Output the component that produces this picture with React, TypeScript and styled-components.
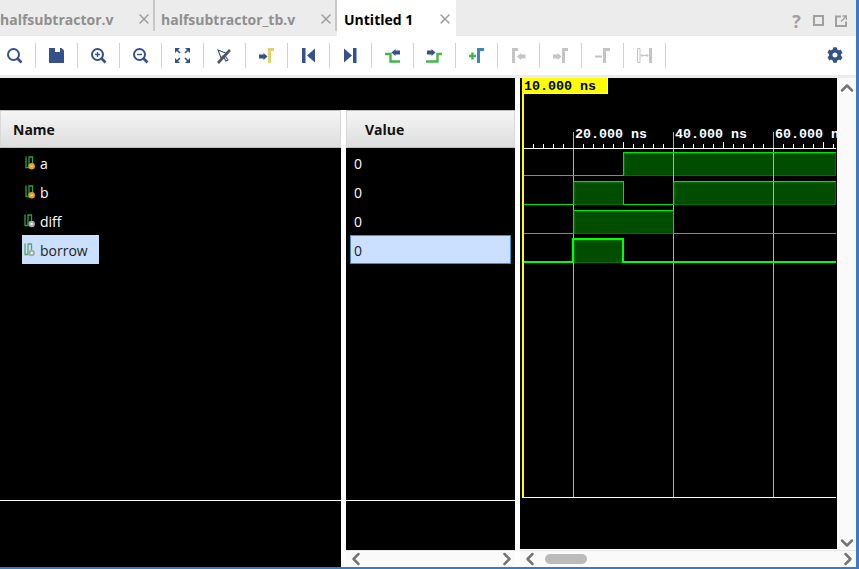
import styled, { createGlobalStyle } from 'styled-components';
import { X, ChevronLeft, ChevronRight, ChevronUp, ChevronDown } from 'lucide-react';
import { FaCog } from 'react-icons/fa';

const NAVY = '#34518a';
const GREY = '#c4c4c4';
const GREEN = '#43b649';

const GlobalStyle = createGlobalStyle`
  html, body { margin: 0; padding: 0; background: #fff; }
  body { font-family: "Open Sans", "Noto Sans", sans-serif; }
  * { box-sizing: border-box; }
`;

const Window = styled.div`
  width: 859px;
  height: 569px;
  display: flex;
  flex-direction: column;
  border-right: 3px solid #3f78c9;
  border-bottom: 2px solid #3f78c9;
  overflow: hidden;
`;

const TabBar = styled.div`
  height: 36px;
  flex: none;
  display: flex;
  background: #ececec;
`;

const Tab = styled.div<{ $width: number; $active?: boolean; $first?: boolean }>`
  width: ${({ $width }) => $width}px;
  display: flex;
  align-items: center;
  justify-content: space-between;
  padding: ${({ $active, $first }) => ($active ? '2px 3px 0 7px' : $first ? '2px 1px 0 0' : '2px 1px 0 6px')};
  background: ${({ $active }) => ($active ? '#fff' : 'transparent')};
  color: ${({ $active }) => ($active ? '#000' : '#8f8f8f')};
  font-size: 14px;
  font-weight: 700;
  white-space: nowrap;
  svg { color: #9a9a9a; }
`;

const TabDivider = styled.div`
  width: 2px;
  height: 31px;
  background: #c8c8c8;
`;

const WindowTools = styled.div`
  margin-left: auto;
  display: flex;
  align-items: center;
  gap: 11px;
  padding: 5px 9px 0 0;
  color: #a0a0a0;
`;

const Help = styled.span`
  font-size: 18px;
  font-weight: 700;
  line-height: 18px;
  width: 11px;
  text-align: center;
`;

const Restore = styled.div`
  width: 11px;
  height: 11px;
  border: 2px solid #a0a0a0;
`;

const Toolbar = styled.div`
  height: 42px;
  flex: none;
  display: flex;
  align-items: flex-start;
  padding-top: 7px;
  background: #fff;
  border-bottom: 3px solid #ececec;
`;

const ToolButton = styled.div`
  width: 42px;
  height: 25px;
  display: flex;
  align-items: center;
  justify-content: center;
  border-right: 1px solid #d2d2d2;
  padding-right: 1px;
  &:first-child { width: 36px; padding-right: 7px; }
`;

const SettingsButton = styled.div`
  margin-left: auto;
  width: 42px;
  height: 25px;
  display: flex;
  align-items: center;
  justify-content: center;
  padding-bottom: 2px;
  padding-right: 1px;
  color: ${NAVY};
`;

const Panes = styled.div`
  flex: 1;
  min-height: 0;
  display: flex;
  background: #fff;
`;

const LeftColumn = styled.div`
  width: 515px;
  display: flex;
  flex-direction: column;
`;

const TopBand = styled.div`
  height: 32px;
  background: #000;
  flex: none;
`;

const Columns = styled.div`
  flex: 1;
  min-height: 0;
  display: flex;
  gap: 5px;
`;

const Column = styled.div<{ $width: number }>`
  width: ${({ $width }) => $width}px;
  display: flex;
  flex-direction: column;
`;

const HeaderCell = styled.div<{ $pad: number }>`
  height: 38px;
  flex: none;
  display: flex;
  align-items: center;
  padding-left: ${({ $pad }) => $pad}px;
  font-size: 14px;
  font-weight: 700;
  color: #111;
  background: linear-gradient(#f5f5f5, #dedede);
  border: 1px solid #bdbdbd;
  border-left-color: #d8d8d8;
  border-right-color: #d8d8d8;
`;

const List = styled.div`
  flex: 1;
  min-height: 0;
  background: #000;
`;

const Footer = styled.div<{ $height: number }>`
  height: ${({ $height }) => $height}px;
  flex: none;
  background: #000;
  border-top: 1px solid #fff;
`;

const NameRow = styled.div`
  height: 29px;
  display: flex;
  align-items: stretch;
  padding-left: 22px;
`;

const NameLabel = styled.div<{ $selected?: boolean }>`
  display: flex;
  align-items: center;
  padding: 2px 11px 0 2px;
  font-size: 14px;
  color: ${({ $selected }) => ($selected ? '#222' : '#fff')};
  background: ${({ $selected }) => ($selected ? '#cbdfff' : 'transparent')};
`;

const ValueRow = styled.div<{ $selected?: boolean }>`
  height: 29px;
  width: 161px;
  margin-left: 4px;
  display: flex;
  align-items: center;
  padding: 2px 0 0 3px;
  font-size: 14px;
  color: ${({ $selected }) => ($selected ? '#222' : '#fff')};
  background: ${({ $selected }) => ($selected ? '#cbdfff' : 'transparent')};
  border: 1px solid ${({ $selected }) => ($selected ? '#3d8fd0' : 'transparent')};
`;

const HScroll = styled.div`
  height: 17px;
  flex: none;
  display: flex;
  align-items: center;
  justify-content: space-between;
  padding: 0 8px 0 10px;
  background: #fafafa;
  border-top: 1px solid #e6e6e6;
  color: #757575;
  svg { flex: none; margin: 0 -10px; }
`;

const ThumbTrack = styled.div`
  flex: 1;
  height: 100%;
  padding: 3px 0 0 15px;
`;

const Thumb = styled.div`
  width: 42px;
  height: 10px;
  border-radius: 5px;
  background: #bbb;
`;

const WavePane = styled.div`
  width: 336px;
  margin-left: 5px;
  display: flex;
  flex-direction: column;
`;

const WaveBody = styled.div`
  flex: 1;
  min-height: 0;
  display: flex;
`;

const WaveCanvas = styled.svg`
  width: 317px;
  height: 471px;
  display: block;
  background: #000;
  flex: none;
`;

const VScroll = styled.div`
  flex: 1;
  display: flex;
  flex-direction: column;
  align-items: center;
  justify-content: space-between;
  padding: 10px 0 7px;
  background: #fafafa;
  color: #757575;
  svg { flex: none; margin: -10px 0; }
`;

const WaveText = styled.text<{ $dark?: boolean }>`
  font-family: "Liberation Mono", monospace;
  font-size: 13.33px;
  font-weight: 700;
  fill: ${({ $dark }) => ($dark ? '#000' : '#fff')};
`;

const Bracket = ({ x, color, reach }: { x: number; color: string; reach: number }) => (
  <path d={`M${x} 2H${reach}V5H${x + 3}V17H${x}Z`} fill={color} />
);

const ArrowRight = ({ x, y, color }: { x: number; y: number; color: string }) => (
  <path d={`M${x} ${y + 0.5}h4.500v-1.500l4 3.500-4 3.500v-1.500h-4.500z`} fill={color} />
);

const ArrowLeft = ({ x, y, color }: { x: number; y: number; color: string }) => (
  <path d={`M${x + 8.5} ${y + 0.5}h-4.500v-1.500l-4 3.500 4 3.500v-1.500h4.500z`} fill={color} />
);

const Lens = ({ mark }: { mark?: 'plus' | 'minus' }) => (
  <g fill="none" stroke={NAVY}>
    <circle cx="9.5" cy="8.5" r="5.5" strokeWidth="2" />
    <path d="M13.5 12.5l4 4" strokeWidth="2.6" />
    {mark && <path d="M7 8.5h5" strokeWidth="1.4" />}
    {mark === 'plus' && <path d="M9.5 6v5" strokeWidth="1.4" />}
  </g>
);

const TOOL_ICONS = [
  <Lens />,
  <path d="M3 2h6v4h5V2h1.5L18 4.5V17H3z" fill={NAVY} />,
  <Lens mark="plus" />,
  <Lens mark="minus" />,
  <g fill={NAVY}>
    <path d="M3 2h5L3 7zM18 2h-5l5 5zM3 17h5l-5-5zM18 17h-5l5-5z" />
    <path d="M5 4l3 3M16 4l-3 3M5 15l3-3M16 15l-3-3" stroke={NAVY} strokeWidth="1.6" />
  </g>,
  <g fill="none">
    <path d="M4 4l9 3.5-2.5 1.5 3.5 5-2 1-3-5-2 2z" stroke={NAVY} strokeWidth="1.1" />
    <path d="M4 17L16 4" stroke="#555" strokeWidth="2.6" />
  </g>,
  <g>
    <ArrowRight x={3} y={8} color={NAVY} />
    <Bracket x={12} color="#e3cf6d" reach={18} />
  </g>,
  <path d="M4 2h3.5v15H4zM17 2.5v14L9 9.5z" fill={NAVY} />,
  <path d="M4 2.5v14l8-7zM13 2h3.5v15H13z" fill={NAVY} />,
  <g>
    <path d="M3 8h5.5v7.5H18" fill="none" stroke={GREEN} strokeWidth="2.4" />
    <ArrowLeft x={9.5} y={4} color={NAVY} />
  </g>,
  <g>
    <path d="M2 15.5h11.5V8H18" fill="none" stroke={GREEN} strokeWidth="2.4" />
    <ArrowRight x={3} y={4} color={NAVY} />
  </g>,
  <g>
    <path d="M3 10h7M6.5 6.5v7" stroke={GREEN} strokeWidth="2.4" />
    <Bracket x={11} color="#3f86b8" reach={18} />
  </g>,
  <g>
    <Bracket x={4} color={GREY} reach={10} />
    <ArrowLeft x={9} y={8} color={GREY} />
  </g>,
  <g>
    <ArrowRight x={3} y={8} color={GREY} />
    <Bracket x={12} color={GREY} reach={18} />
  </g>,
  <g>
    <path d="M3 10.5h7" stroke={GREY} strokeWidth="2" />
    <Bracket x={11} color={GREY} reach={18} />
  </g>,
  <g>
    <path d="M3.5 2.5h2.5v14H3.5z" fill="none" stroke={GREY} />
    <path d="M15 2h3v15h-3z" fill={GREY} />
    <path d="M7 9.5h7M8.5 8l-1.5 1.5L8.5 11M12.5 8l1.500 1.500L12.500 11" fill="none" stroke={GREY} />
  </g>,
];

const SignalIcon = ({ kind, selected }: { kind: 'in' | 'out'; selected?: boolean }) => {
  const line = selected ? '#55a96a' : '#2ea043';
  const shift = kind === 'in' ? 1 : 0;
  return (
    <svg width="16" height="16" viewBox="0 0 16 16">
      <path
        transform={`translate(${shift} 0)`}
        d="M1 0.500V11.500H4V1H7.500V8"
        fill="none"
        stroke={line}
        strokeWidth="1.300"
      />
      {kind === 'in' ? (
        <>
          <circle cx="7.700" cy="10.200" r="3.200" fill="#e89a2c" />
          <path d="M6.700 9.500l1 1.500 1-1.500" fill="none" stroke="#fff2c8" strokeWidth="0.800" />
        </>
      ) : (
        <>
          <circle cx="7.700" cy="10" r="3.200" fill="#a8a8a8" />
          <circle cx="7.700" cy="10" r="1.300" fill="#f0f0f0" />
        </>
      )}
    </svg>
  );
};

const SIGNALS = [
  { name: 'a', kind: 'in' as const, base: 175, pulses: [[623, 835]] },
  { name: 'b', kind: 'in' as const, base: 204, pulses: [[573, 623], [673, 835]] },
  { name: 'diff', kind: 'out' as const, base: 233, pulses: [[573, 673]] },
  { name: 'borrow', kind: 'out' as const, base: 262, pulses: [[573, 623]], selected: true },
];

const LEFT = 523;
const RIGHT = 836;

// thin traces sit on the pixel centre, the selected 2px trace on the pixel edge
const trace = (base: number, pulses: number[][], off: number) => {
  let d = `M${LEFT} ${base + off}`;
  pulses.forEach(([from, to]) => {
    d += `H${from + off}V${base - 23 + off}`;
    d += to === 835 ? `H${RIGHT}` : `H${to + off}V${base + off}`;
  });
  if (pulses[pulses.length - 1][1] !== 835) d += `H${RIGHT}`;
  return d;
};

const minorTicks = () => {
  const ticks = [];
  for (let x = 533; x < RIGHT; x += 10) {
    if ((x - 573) % 100 === 0) continue;
    ticks.push(
      <line key={x} x1={x + 0.5} x2={x + 0.5} y1={(x - 523) % 50 === 0 ? 142 : 144} y2={148} stroke="#fff" />,
    );
  }
  return ticks;
};

const Waveform = () => (
  <WaveCanvas viewBox="520 78 317 471" shapeRendering="crispEdges">
    {SIGNALS.map((s) =>
      s.pulses.map(([from, to]) => (
        <rect
          key={s.name + from}
          x={from + 1.5}
          y={s.base - 21.5}
          width={to - from - 1}
          height={22}
          fill="#004d00"
          stroke="#007000"
        />
      )),
    )}
    {[573, 673, 773].map((x) => (
      <line key={x} x1={x + 0.5} x2={x + 0.5} y1={132} y2={497} stroke="#b0b0b0" />
    ))}
    {SIGNALS.map((s) => (
      <path
        key={s.name}
        d={trace(s.base, s.pulses, s.selected ? 0 : 0.5)}
        fill="none"
        stroke={s.selected ? '#00ff00' : '#00e600'}
        strokeWidth={s.selected ? 2 : 1}
      />
    ))}
    <line x1={LEFT} x2={RIGHT} y1={148.5} y2={148.5} stroke="#fff" />
    {minorTicks()}
    <line x1={LEFT} x2={RIGHT} y1={497.5} y2={497.5} stroke="#fff" />
    <rect x={522} y={78} width={2} height={420} fill="#ffff00" />
    <rect x={523} y={78} width={85} height={16} fill="#fff" />
    <rect x={523} y={78} width={84} height={15} fill="#ffff00" />
    <g shapeRendering="auto">
      <WaveText $dark x={524} y={90}>10.000 ns</WaveText>
      {[['20.000 ns', 575], ['40.000 ns', 675], ['60.000 ns', 775]].map(([label, x]) => (
        <WaveText key={label} x={x} y={138}>{label}</WaveText>
      ))}
    </g>
  </WaveCanvas>
);

export default function App() {
  return (
    <>
      <GlobalStyle />
      <Window>
        <TabBar>
          <Tab $width={153} $first>halfsubtractor.v<X size={16} strokeWidth={2} /></Tab>
          <TabDivider />
          <Tab $width={180}>halfsubtractor_tb.v<X size={16} strokeWidth={2} /></Tab>
          <TabDivider />
          <Tab $width={119} $active>Untitled 1<X size={16} strokeWidth={2} /></Tab>
          <WindowTools>
            <Help>?</Help>
            <Restore />
            <svg width="12" height="12" viewBox="0 0 12 12" fill="none" stroke="#a0a0a0" strokeWidth="2">
              <path d="M6 1.500H1V11H11V6.500" />
              <path d="M6 6.500L11 1.500M7.500 1H11.500V5" strokeWidth="1.500" />
            </svg>
          </WindowTools>
        </TabBar>
        <Toolbar>
          {TOOL_ICONS.map((icon, i) => (
            <ToolButton key={i}>
              <svg width="20" height="20" viewBox="0 0 20 20">{icon}</svg>
            </ToolButton>
          ))}
          <SettingsButton><FaCog size={16} /></SettingsButton>
        </Toolbar>
        <Panes>
          <LeftColumn>
            <TopBand />
            <Columns>
              <Column $width={341}>
                <HeaderCell $pad={12}>Name</HeaderCell>
                <List>
                  {SIGNALS.map((s) => (
                    <NameRow key={s.name}>
                      <NameLabel $selected={s.selected}>
                        <SignalIcon kind={s.kind} selected={s.selected} />
                        {s.name}
                      </NameLabel>
                    </NameRow>
                  ))}
                </List>
                <Footer $height={67} />
              </Column>
              <Column $width={169}>
                <HeaderCell $pad={18}>Value</HeaderCell>
                <List>
                  {SIGNALS.map((s) => (
                    <ValueRow key={s.name} $selected={s.selected}>0</ValueRow>
                  ))}
                </List>
                <Footer $height={50} />
                <HScroll>
                  <ChevronLeft size={20} strokeWidth={3} />
                  <ChevronRight size={20} strokeWidth={3} />
                </HScroll>
              </Column>
            </Columns>
          </LeftColumn>
          <WavePane>
            <WaveBody>
              <Waveform />
              <VScroll>
                <ChevronUp size={20} strokeWidth={3} />
                <ChevronDown size={20} strokeWidth={3} />
              </VScroll>
            </WaveBody>
            <HScroll>
              <ChevronLeft size={20} strokeWidth={3} />
              <ThumbTrack><Thumb /></ThumbTrack>
              <ChevronRight size={20} strokeWidth={3} />
            </HScroll>
          </WavePane>
        </Panes>
      </Window>
    </>
  );
}
